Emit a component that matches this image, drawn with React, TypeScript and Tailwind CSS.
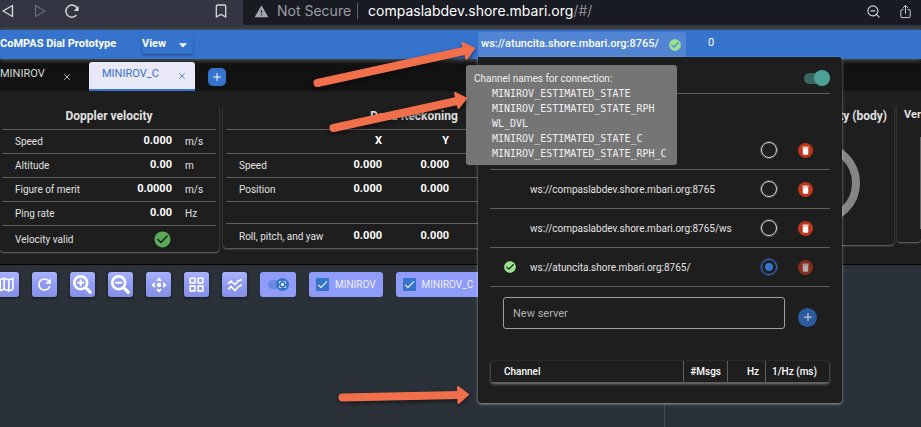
import { useState } from 'react';
import { Bookmark, Plus, X, ZoomOut } from 'lucide-react';
import { FaSearchMinus, FaSearchPlus } from 'react-icons/fa';
import { IoShareOutline } from 'react-icons/io5';
import {
  MdArrowDropDown,
  MdCenterFocusStrong,
  MdCheck,
  MdCheckCircle,
  MdControlCamera,
  MdDelete,
  MdGridView,
  MdOutlineMap,
  MdRefresh,
  MdWarning,
} from 'react-icons/md';

const channels = [
  'MINIROV_ESTIMATED_STATE',
  'MINIROV_ESTIMATED_STATE_RPH',
  'WL_DVL',
  'MINIROV_ESTIMATED_STATE_C',
  'MINIROV_ESTIMATED_STATE_RPH_C',
];

const servers = [
  { id: 'first', url: '' },
  { id: 'compas', url: 'ws://compaslabdev.shore.mbari.org:8765' },
  { id: 'compas-ws', url: 'ws://compaslabdev.shore.mbari.org:8765/ws' },
  { id: 'atuncita', url: 'ws://atuncita.shore.mbari.org:8765/' },
];

const doppler = [
  { label: 'Speed', value: '0.000', unit: 'm/s' },
  { label: 'Altitude', value: '0.00', unit: 'm' },
  { label: 'Figure of merit', value: '0.0000', unit: 'm/s' },
  { label: 'Ping rate', value: '0.00', unit: 'Hz' },
];

function TracksIcon() {
  return (
    <svg className="h-4 w-4" viewBox="0 0 16 16" fill="none" stroke="currentColor" strokeWidth="1.6">
      <path d="M1 7l3-3 4 3.500L11 4l4-1.500" />
      <path d="M1 12.500l3-3 4 4L11.500 9.500l3.500-1.500" />
    </svg>
  );
}

const tools = [
  { name: 'Map', icon: <MdOutlineMap size={19} /> },
  { name: 'Refresh', icon: <MdRefresh size={19} /> },
  { name: 'Zoom in', icon: <FaSearchPlus size={19} /> },
  { name: 'Zoom out', icon: <FaSearchMinus size={19} /> },
  { name: 'Center', icon: <MdControlCamera size={18} /> },
  { name: 'Grid', icon: <MdGridView size={19} /> },
  { name: 'Tracks', icon: <TracksIcon /> },
];

const card = 'bg-[#1e1e1e] rounded-sm shadow-[0_1px_2px_rgba(255,255,255,0.35)]';

function BrowserBar() {
  return (
    <div className="flex h-[30px] bg-[#333542] text-[#d5d6da]">
      <div className="flex h-[22px] w-[243px] shrink-0 items-center pl-0.5">
        <button aria-label="Back">
          <svg className="h-3.5 w-3" viewBox="0 0 12 14" fill="none" stroke="currentColor" strokeWidth="1.4" strokeLinejoin="round">
            <path d="M10.5 1.5v11L1 7z" />
          </svg>
        </button>
        <button aria-label="Forward" className="ml-5 text-[#6c6e79]">
          <svg className="h-3.5 w-3" viewBox="0 0 12 14" fill="none" stroke="currentColor" strokeWidth="1.2" strokeLinejoin="round">
            <path d="M1.5 1.5v11L11 7z" />
          </svg>
        </button>
        <button aria-label="Reload" className="ml-[19px]">
          <svg className="h-3.5 w-3.5" viewBox="0 0 14 14" fill="none" stroke="currentColor" strokeWidth="1.5">
            <path d="M11.5 11A6 6 0 1 1 12.6 5.2" />
            <path d="M13.6 2v5H8.6z" fill="currentColor" stroke="none" />
          </svg>
        </button>
        <button aria-label="Bookmark" className="ml-auto mr-3.5">
          <Bookmark size={16} strokeWidth={2} />
        </button>
      </div>
      <div className="flex h-[25px] flex-1 items-center rounded-bl bg-[#191b22] pb-[3px] pl-[11px] font-['Inter',sans-serif] text-sm">
        <MdWarning size={15} className="text-[#a5a7ad]" />
        <span className="ml-2 text-[#9b9da4]">Not Secure</span>
        <span className="ml-1.5 h-4 w-px bg-[#63656d]" />
        <span className="ml-2.5 text-white">
          compaslabdev.shore.mbari.org<span className="text-[#8b8d94]">/#/</span>
        </span>
        <button aria-label="Zoom out" className="ml-auto">
          <ZoomOut size={15} strokeWidth={1.8} />
        </button>
        <button aria-label="Share" className="ml-[17px] mr-2">
          <IoShareOutline size={15} />
        </button>
      </div>
    </div>
  );
}

function ChannelTooltip() {
  return (
    <div role="tooltip" className="absolute -left-3 top-[35px] z-10 w-[211px] rounded-[3px] bg-[#757575] px-2 pb-1 pt-1.5 text-[#f0f0f0]">
      <p className="text-[10px] leading-[15px]">Channel names for connection:</p>
      <ul className="pl-[18px] font-['DejaVu_Sans_Mono',monospace] text-[10px] leading-[15px]">
        {channels.map((name) => (
          <li key={name}>{name}</li>
        ))}
      </ul>
    </div>
  );
}

function ServerPanel() {
  const [selected, setSelected] = useState('atuncita');

  return (
    <div className="absolute left-0 top-[27px] w-[364px] rounded-b rounded-tr bg-[#1e1e1e] px-3 pb-5 text-[#e4e4e4] shadow-[0_1px_3px_rgba(255,255,255,0.5)]">
      <div className="flex h-[37px] items-center justify-end border-b border-[#5f5f5f] pt-1.5">
        <input
          type="checkbox"
          role="switch"
          aria-label="Connection enabled"
          defaultChecked
          className="h-[11px] w-[26px] appearance-none rounded-full bg-[#386661] before:-mt-[3px] before:ml-2.5 before:block before:size-4 before:rounded-full before:bg-[#4ea197]"
        />
      </div>

      {/* Known servers */}
      <ul className="pt-[37px]">
        {servers.map((server) => (
          <li key={server.id} className="flex h-[39px] items-center border-b border-[#5f5f5f]">
            <span className="flex w-10 shrink-0 justify-center text-[#9be38f]">
              {server.id === selected && <MdCheckCircle size={14} />}
            </span>
            <label htmlFor={server.id} className="flex-1 text-[10px]">{server.url}</label>
            <input
              id={server.id}
              type="radio"
              name="server"
              aria-label={server.url || 'Server'}
              checked={server.id === selected}
              onChange={() => setSelected(server.id)}
              className="size-4 appearance-none rounded-full border border-[#d8d8d8] bg-clip-content p-[3px] outline outline-[#d8d8d8]/30 checked:border-[#3673cd] checked:bg-[#3673cd] checked:outline-[#3673cd]/40"
            />
            <button
              aria-label="Remove server"
              disabled={server.id === selected}
              className="ml-[21px] mr-[17px] flex size-[15px] items-center justify-center rounded-full bg-[#bf361c] text-white disabled:opacity-65"
            >
              <MdDelete size={11} />
            </button>
          </li>
        ))}
      </ul>

      <div className="flex items-center pl-[13px] pt-2.5">
        <input
          type="text"
          aria-label="New server"
          placeholder="New server"
          className="h-8 min-w-0 flex-1 rounded-[3px] border border-[#a0a0a0] bg-transparent px-[9px] text-[11px] outline-none placeholder:text-[#b0b0b0]"
        />
        <button aria-label="Add server" className="ml-[13px] mr-[13px] mt-2 flex size-[19px] items-center justify-center rounded-full bg-[#2c5a9e] text-[#b9c6d8]">
          <Plus size={12} strokeWidth={2.5} />
        </button>
      </div>

      <div className="mt-8 px-px">
        <table className="w-full table-fixed border-separate border-spacing-0 rounded-[3px] text-[10px] shadow-[0_1px_3px_rgba(255,255,255,0.45)]">
          <thead>
            <tr className="h-[22px] text-right [&>th]:border-b [&>th]:border-[#5f5f5f] [&>th]:py-0 [&>th]:font-medium [&>th]:text-white">
              <th className="pl-[13px] text-left">Channel</th>
              <th className="w-11 border-l border-[#5f5f5f] pr-1.5">#Msgs</th>
              <th className="w-[38px] border-l border-[#5f5f5f] pr-1.5">Hz</th>
              <th className="w-16 border-l border-[#5f5f5f] pr-3">1/Hz (ms)</th>
            </tr>
          </thead>
        </table>
      </div>
    </div>
  );
}

function Header() {
  return (
    <header className="relative z-20 flex h-[29px] bg-[#3673cd] text-white shadow-[0_1px_5px_rgba(255,255,255,0.35)]">
      <div className="flex w-[478px] shrink-0 items-center">
        <h1 className="w-[142px] text-[11px] font-bold">CoMPAS Dial Prototype</h1>
        <button className="flex h-[19px] w-[51px] items-center justify-between rounded-[3px] text-[11px] font-bold shadow-[0_1px_2px_rgba(0,0,0,0.4)]">
          View
          <MdArrowDropDown size={20} />
        </button>
      </div>
      <div className="relative pt-0.5">
        <button className="flex h-[25px] w-[208px] items-center justify-between rounded-[3px] bg-[#5184d2] pl-[3px] pr-1 text-[11px] font-medium">
          ws://atuncita.shore.mbari.org:8765/
          <MdCheckCircle size={14} className="text-[#9be38f]" />
        </button>
        <ServerPanel />
        <ChannelTooltip />
      </div>
      <span className="ml-[22px] pt-1 text-[11px] leading-[18px]">0</span>
    </header>
  );
}

function Tabs() {
  return (
    <nav className="flex h-8 items-end bg-[#121212] text-[11px] text-[#d8d8d8]">
      <div className="flex h-[29px] w-[89px] items-center">
        <button className="pb-1">MINIROV</button>
        <button aria-label="Close MINIROV" className="ml-auto mr-[17px]">
          <X size={10} />
        </button>
      </div>
      <div className="z-20 flex h-[29px] w-[106px] items-center rounded-t-[3px] border-b-2 border-[#3673cd] bg-[#e9e8f6] pl-[13px] text-[#3673cd]">
        <button className="pb-0.5">MINIROV_C</button>
        <button aria-label="Close MINIROV_C" className="ml-auto mr-2">
          <X size={10} />
        </button>
      </div>
      <button aria-label="Add tab" className="mb-[5px] ml-[13px] flex size-[18px] items-center justify-center rounded-[5px] bg-[#3673cd] text-white">
        <Plus size={12} />
      </button>
    </nav>
  );
}

function DopplerCard() {
  return (
    <section className={`${card} w-[219px] shrink-0 pl-0.5 pr-[3px]`}>
      <h2 className="h-[25px] text-center text-xs font-bold leading-[25px]">Doppler velocity</h2>
      <table className="w-full table-fixed border-separate border-spacing-0 text-[10px] [&_td]:border-t [&_td]:border-[#5f5f5f] [&_td]:p-0">
        <tbody>
          {doppler.map((row) => (
            <tr key={row.label} className="h-6">
              <td><span className="pl-[13px]">{row.label}</span></td>
              <td className="w-[60px] text-right text-[11px] font-bold text-white">{row.value}</td>
              <td className="w-11"><span className="pl-[13px]">{row.unit}</span></td>
            </tr>
          ))}
          <tr className="h-[27px]">
            <td><span className="pl-[13px]">Velocity valid</span></td>
            <td><MdCheckCircle size={19} className="ml-auto text-[#5aab58]" /></td>
            <td />
          </tr>
        </tbody>
      </table>
    </section>
  );
}

function DeadReckoningCard() {
  const values = (label: string, height: string) => (
    <tr className={height}>
      <td><span className="pl-[13px]">{label}</span></td>
      <td className="text-right text-[11px] font-bold text-white">{label && '0.000'}</td>
      <td className="text-right text-[11px] font-bold text-white">{label && '0.000'}</td>
      <td />
    </tr>
  );

  return (
    <section className={`${card} ml-1 w-[382px] shrink-0 px-[3px]`}>
      <h2 className="h-[25px] text-center text-xs font-bold leading-[25px]">Dead Reckoning</h2>
      <table className="w-full table-fixed border-separate border-spacing-0 text-[10px] [&_td]:border-t [&_td]:border-[#5f5f5f] [&_td]:p-0">
        <colgroup>
          <col className="w-[108px]" />
          <col className="w-12" />
          <col className="w-[67px]" />
          <col />
        </colgroup>
        <tbody>
          <tr className="h-6 text-right text-[11px] font-bold text-white">
            <td />
            <td>X</td>
            <td>Y</td>
            <td />
          </tr>
          {values('Speed', 'h-6')}
          {values('Position', 'h-6')}
          {values('', 'h-[22px]')}
          {values('Roll, pitch, and yaw', 'h-[25px]')}
        </tbody>
      </table>
    </section>
  );
}

function Dials() {
  return (
    <main className="flex items-start overflow-hidden border-b border-black bg-[#1e1e1e] pb-3 pt-[13px] text-[#e0e0e0]">
      <DopplerCard />
      <DeadReckoningCard />
      <section className={`${card} ml-auto w-[149px] shrink-0`}>
        <h2 className="h-[25px] whitespace-nowrap pr-[7px] text-right text-xs font-bold leading-[25px]">Linear velocity (body)</h2>
        <svg className="mx-auto mb-[21px] mt-2 h-[87px] w-[87px]" viewBox="0 0 87 87">
          <circle cx="43" cy="46" r="37" fill="none" stroke="#858585" strokeWidth="8" />
        </svg>
      </section>
      <section className={`${card} ml-[3px] w-6 shrink-0 overflow-hidden pb-[13px]`}>
        <h2 className="h-[33px] pl-[7px] text-[11px] font-bold leading-[21px]">Ver</h2>
        <div className="ml-auto h-[92px] w-px bg-[#666]" />
      </section>
    </main>
  );
}

function LayerToggle({ label }: { label: string }) {
  return (
    <label className="flex h-[25px] items-center gap-1.5 rounded-[3px] bg-[#8f9cfa] px-[7px] text-[10px] text-[#eef0ff]">
      <span className="grid size-[13px] place-items-center">
        <input type="checkbox" defaultChecked className="col-start-1 row-start-1 size-[13px] appearance-none rounded-[1px] bg-[#3673cd]" />
        <MdCheck size={13} className="pointer-events-none z-0 col-start-1 row-start-1 text-white" />
      </span>
      {label}
    </label>
  );
}

function MapView() {
  return (
    <section className="flex flex-1 bg-[#2a3138]">
      <div className="w-[72.2%] border-r border-[#464a4e] pt-[7px]">
        <div className="-ml-1.5 flex gap-[13px]">
          {tools.map((tool) => (
            <button
              key={tool.name}
              aria-label={tool.name}
              className="flex size-[25px] shrink-0 items-center justify-center rounded-[3px] bg-linear-to-b from-[#a9b2ff] from-0% via-[#8f9bf2] via-50% to-[#8790e6] text-white shadow-[0_1px_3px_rgba(0,0,0,0.5)]"
            >
              {tool.icon}
            </button>
          ))}
          <label className="grid h-[25px] w-9 place-items-center rounded-[3px] bg-[#8f9cfa]">
            <input
              type="checkbox"
              role="switch"
              aria-label="Keep centered"
              defaultChecked
              className="col-start-1 row-start-1 h-[9px] w-5 appearance-none rounded-full bg-[#688ae0] before:-mt-0.5 before:ml-2 before:block before:size-[13px] before:rounded-full before:bg-[#3673cd]"
            />
            <MdCenterFocusStrong size={9} className="z-0 col-start-1 row-start-1 ml-[9px] text-white" />
          </label>
          <LayerToggle label="MINIROV" />
          <LayerToggle label="MINIROV_C" />
        </div>
      </div>
    </section>
  );
}

function Arrows() {
  return (
    <svg
      className="pointer-events-none absolute left-0 top-0 z-30 h-[427px] w-[478px] drop-shadow-[0_2px_2px_rgba(0,0,0,0.5)]"
      fill="#f26f4c"
      stroke="#f26f4c"
      strokeLinecap="round"
      strokeLinejoin="round"
    >
      <path d="M317.500 83L464 51" strokeWidth="8" />
      <path d="M462.500 43L474 48.500L466.500 59z" strokeWidth="2" />
      <path d="M333.500 128L457 101" strokeWidth="8" />
      <path d="M455 93L466 98.500L458.500 108z" strokeWidth="2" />
      <path d="M342.500 397.500L459 395" strokeWidth="8" />
      <path d="M458 387L468 394.500L458.500 403z" strokeWidth="2" />
    </svg>
  );
}

export default function App() {
  return (
    <div className="relative flex min-h-screen flex-col overflow-hidden bg-[#1e1e1e] font-['Roboto',sans-serif] text-white">
      <BrowserBar />
      <Header />
      <Tabs />
      <Dials />
      <MapView />
      <Arrows />
    </div>
  );
}
